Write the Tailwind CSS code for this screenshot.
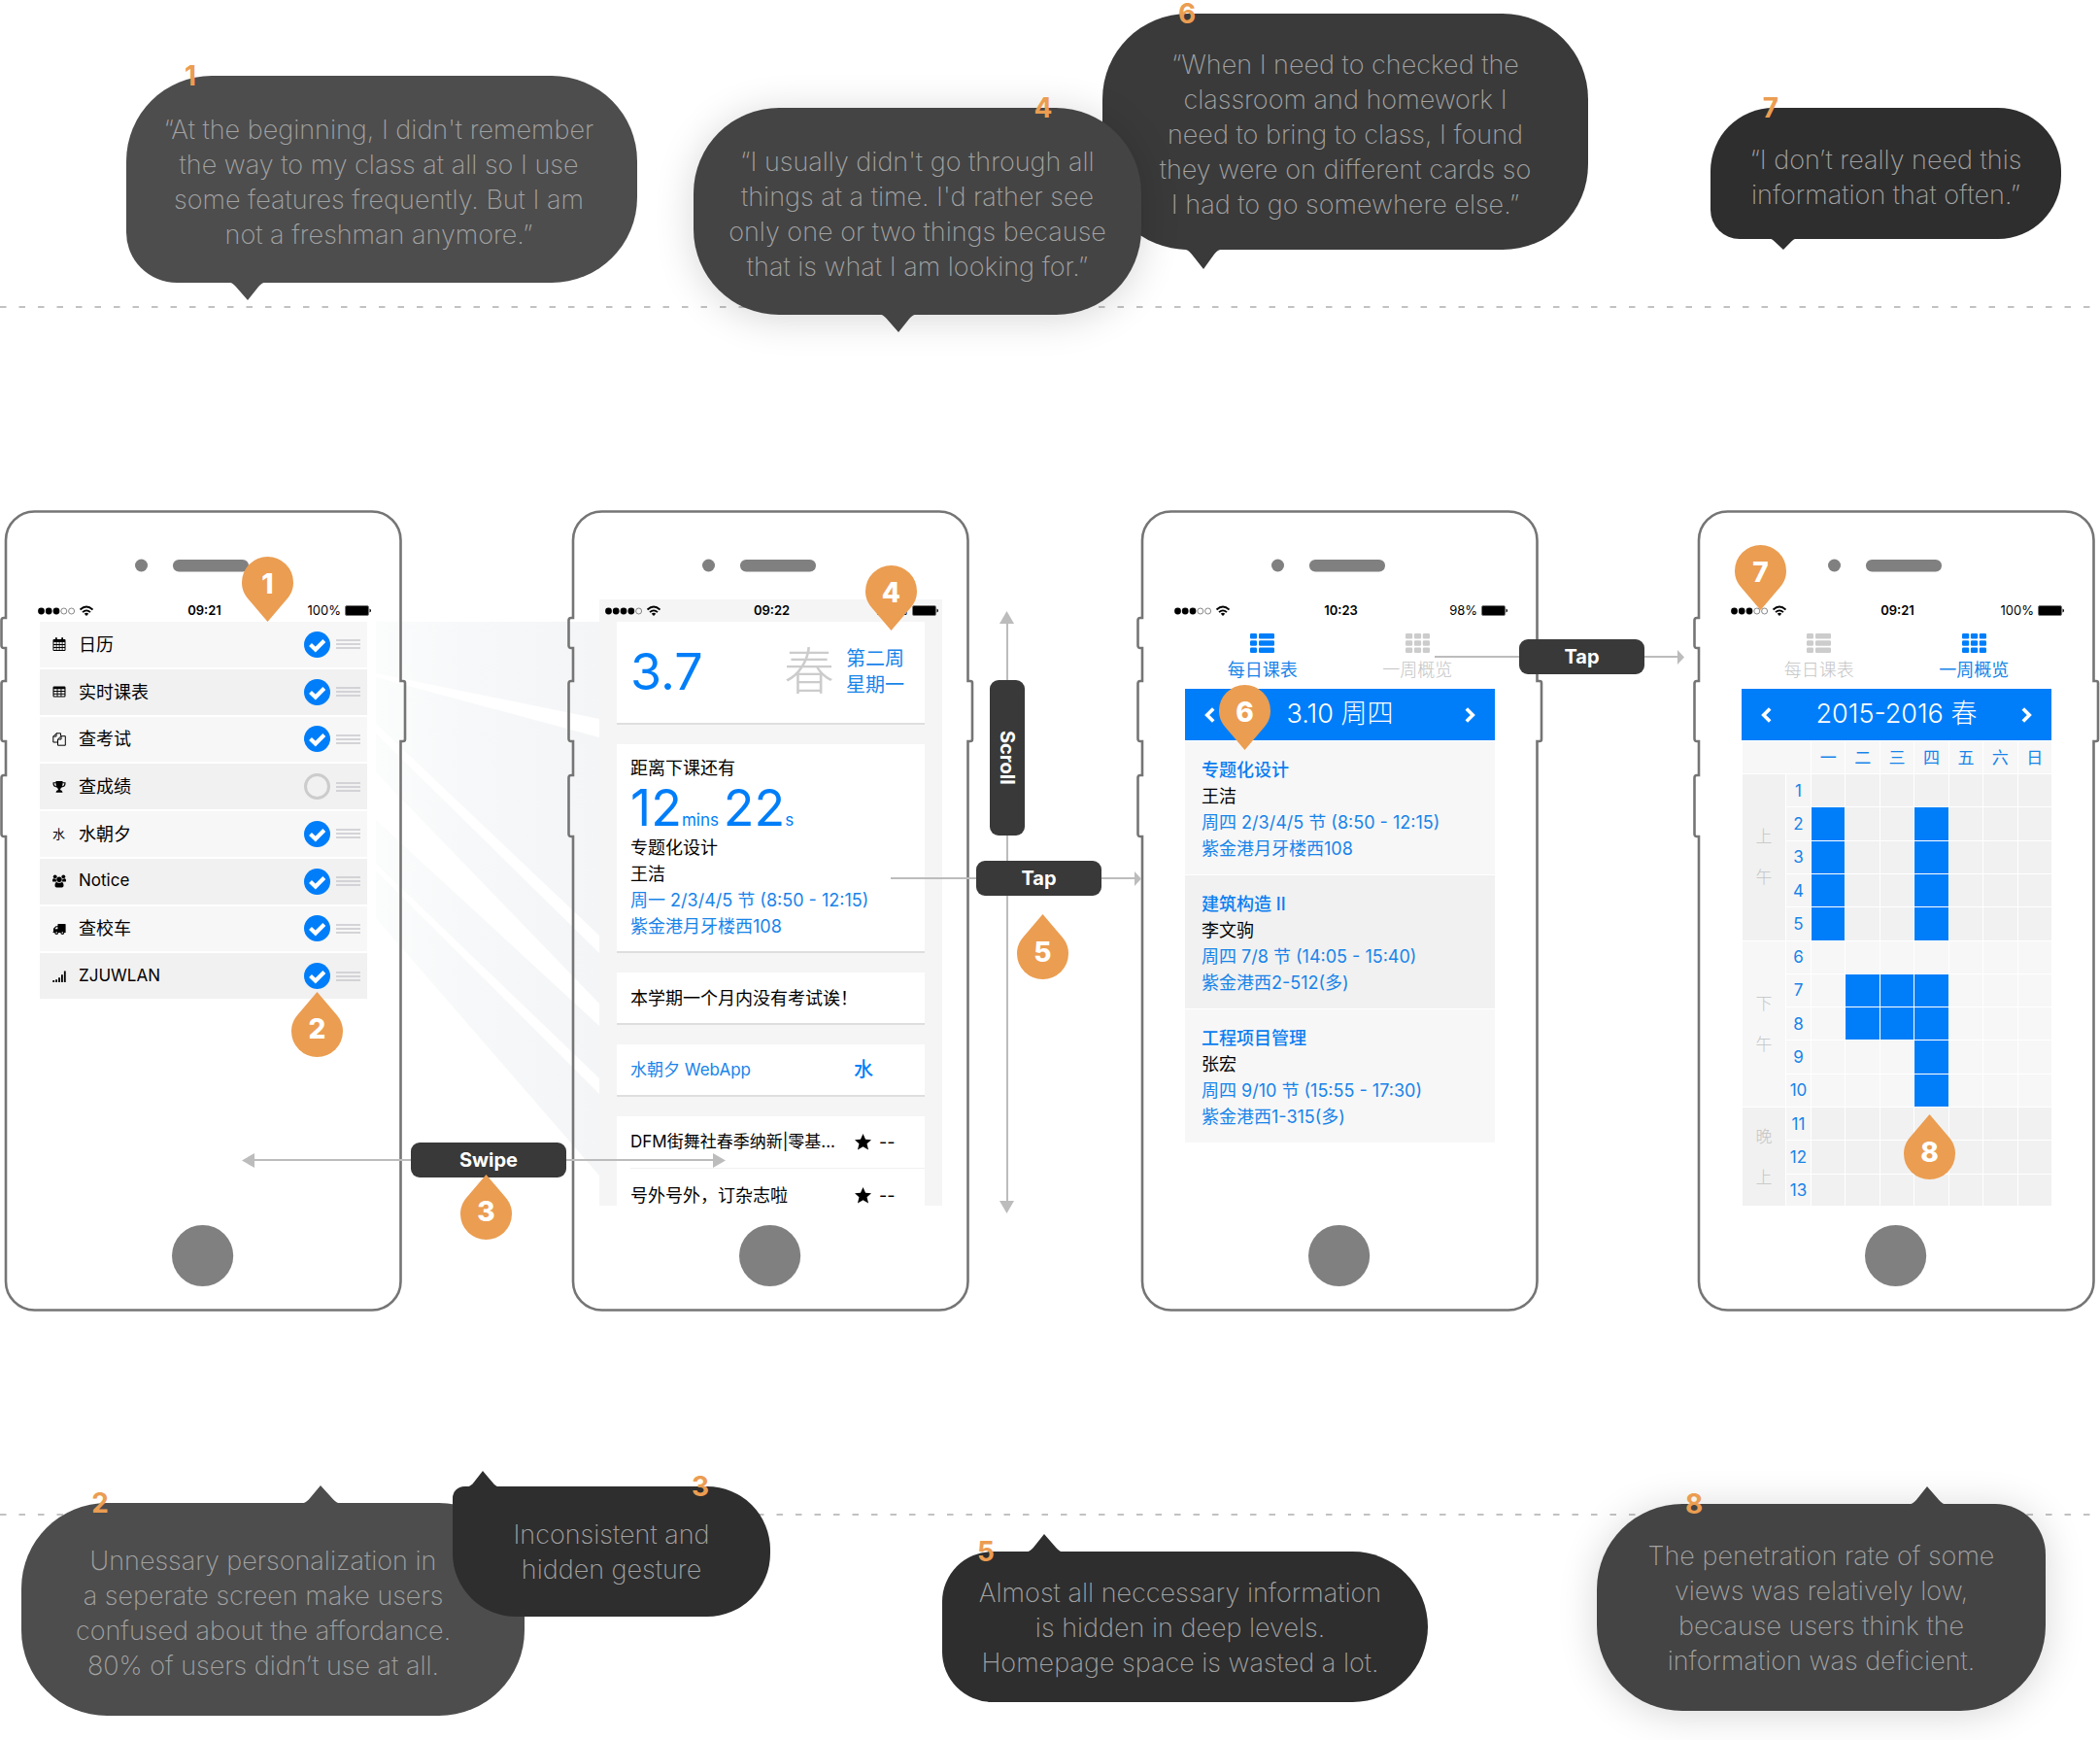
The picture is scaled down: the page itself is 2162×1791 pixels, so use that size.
<!DOCTYPE html>
<html lang="en">
<head>
<meta charset="utf-8">
<meta name="viewport" content="width=device-width, initial-scale=1">
<title>Usability findings: timetable app</title>
<script src="https://cdn.jsdelivr.net/npm/@tailwindcss/browser@4"></script>
</head>
<body class="bg-white font-[Inter,'Noto_Sans_CJK_SC',sans-serif] text-black">

<!-- Shared shapes -->
<svg class="hidden" aria-hidden="true">
  <symbol id="phone" viewBox="0 0 419 825">
    <path fill="none" stroke="#757575" stroke-width="2.6" d="M35.500 1.500H383A29.500 29.500 0 0 1 412.500 31V176H415Q417 176 417 178V236Q417 238 415 238H412.500V793.500A29.500 29.500 0 0 1 383 823.500H35.500A29.500 29.500 0 0 1 6 793.500V336H4Q1.500 336 1.500 333.500V275.500Q1.500 273 4 273H6V238H4Q1.500 238 1.500 235.500V178.500Q1.500 176 4 176H6V142H4Q1.500 142 1.500 139.500V113.500Q1.500 111 4 111H6V31A29.500 29.500 0 0 1 35.500 1.500Z"/>
    <circle cx="145.500" cy="57" r="6.500" fill="#808080"/>
    <rect x="178" y="51" width="78" height="12.500" rx="6.200" fill="#808080"/>
    <circle cx="208.600" cy="767.500" r="31.600" fill="#808080"/>
  </symbol>
  <symbol id="pin" viewBox="0 0 53 67">
    <path fill="#eb9d51" d="M26.500 67L6.500 43.500C2 38 0 33 0 26.500A26.500 26.500 0 0 1 53 26.500C53 33 51 38 46.500 43.500Z"/>
  </symbol>
  <symbol id="tail" viewBox="0 0 46 18" preserveAspectRatio="none">
    <path fill="currentColor" d="M0 0C5 .3 8 1.500 11 5L23 18L34 5C37 1.500 40 .3 46 0Z"/>
  </symbol>
  <symbol id="head" viewBox="0 0 13 15" preserveAspectRatio="none"><path fill="#bcbcbc" d="M0 0L13 7.500L0 15Z"/></symbol>
  <symbol id="tick" viewBox="0 0 27 27"><path fill="none" stroke="#fff" stroke-width="4.200" d="M6.500 13.500L11.800 18.500L20.800 9.500"/></symbol>
  <symbol id="grip" viewBox="0 0 25 10"><path stroke="#c9c9ce" stroke-width="1.300" d="M0 1H25M0 5H25M0 9H25"/></symbol>
  <symbol id="dots3" viewBox="0 0 57 14">
    <circle cx="3.500" cy="7" r="3.400"/><circle cx="11.200" cy="7" r="3.400"/><circle cx="19" cy="7" r="3.400"/>
    <g fill="none" stroke="#555" stroke-width=".7"><circle cx="26.800" cy="7" r="3"/><circle cx="34.600" cy="7" r="3"/></g>
    <g fill="none" stroke="#000" stroke-width="1.800"><path d="M43.500 5.500Q50 -.5 56.500 5.500M46 8.200Q50 4.500 54 8.200"/></g><path d="M47.800 9.700Q50 8 52.200 9.700L50 12Z"/>
  </symbol>
  <symbol id="dots4" viewBox="0 0 57 14">
    <circle cx="3.500" cy="7" r="3.400"/><circle cx="11.200" cy="7" r="3.400"/><circle cx="19" cy="7" r="3.400"/><circle cx="26.800" cy="7" r="3.400"/>
    <g fill="none" stroke="#555" stroke-width=".7"><circle cx="34.600" cy="7" r="3"/></g>
    <g fill="none" stroke="#000" stroke-width="1.800"><path d="M43.500 5.500Q50 -.5 56.500 5.500M46 8.200Q50 4.500 54 8.200"/></g><path d="M47.800 9.700Q50 8 52.200 9.700L50 12Z"/>
  </symbol>
  <symbol id="battery" viewBox="0 0 27 11">
    <rect x=".5" y=".5" width="24" height="10" rx="1.500" fill="#000" stroke="#777"/><path d="M25.500 3.500Q27 4 27 5.500T25.500 7.500Z"/>
  </symbol>
  <symbol id="rows" viewBox="0 0 25 20">
    <g fill="currentColor"><rect width="7" height="5.600" rx="1.300"/><rect x="9" width="16" height="5.600" rx="1.300"/><rect y="7.200" width="7" height="5.600" rx="1.300"/><rect x="9" y="7.200" width="16" height="5.600" rx="1.300"/><rect y="14.400" width="7" height="5.600" rx="1.300"/><rect x="9" y="14.400" width="16" height="5.600" rx="1.300"/></g>
  </symbol>
  <symbol id="cells" viewBox="0 0 25 20">
    <g fill="currentColor"><rect width="7.200" height="5.600" rx="1.300"/><rect x="8.900" width="7.200" height="5.600" rx="1.300"/><rect x="17.800" width="7.200" height="5.600" rx="1.300"/><rect y="7.200" width="7.200" height="5.600" rx="1.300"/><rect x="8.900" y="7.200" width="7.200" height="5.600" rx="1.300"/><rect x="17.800" y="7.200" width="7.200" height="5.600" rx="1.300"/><rect y="14.400" width="7.200" height="5.600" rx="1.300"/><rect x="8.900" y="14.400" width="7.200" height="5.600" rx="1.300"/><rect x="17.800" y="14.400" width="7.200" height="5.600" rx="1.300"/></g>
  </symbol>
  <symbol id="prev" viewBox="0 0 11 16"><path fill="none" stroke="#fff" stroke-width="3.600" d="M9.200 1.500L2.700 8L9.200 14.500"/></symbol>
  <symbol id="next" viewBox="0 0 11 16"><path fill="none" stroke="#fff" stroke-width="3.600" d="M1.800 1.500L8.300 8L1.800 14.500"/></symbol>
  <symbol id="star" viewBox="0 0 16 16"><path d="M8 0L10.400 5.300L16 5.900L11.800 9.700L13.200 15.600L8 12.500L2.800 15.600L4.200 9.700L0 5.900L5.600 5.300Z"/></symbol>
</svg>

<main class="w-full overflow-hidden">

  <!-- Quotes above the flow -->
  <section class="relative h-[525px]">
    <svg class="absolute inset-x-0 top-[315px] h-0.5 w-full"><line x1="0" y1="1" x2="100%" y2="1" stroke="#c2c2c2" stroke-width="2" stroke-dasharray="6.500 13"/></svg>
    <div class="flex items-start text-center text-[27px] leading-9 font-extralight text-[#a3a3a3]">
      <blockquote class="relative mt-[78px] ml-[130px] w-[526px] shrink-0 rounded-[88px] rounded-bl-[52px] bg-[#4d4d4d] pt-[38px] pr-1.5 pb-[31px] whitespace-nowrap">
        “At the beginning, I didn't remember<br>the way to my class at all so I use<br>some features frequently. But I am<br>not a freshman anymore.”
        <span class="absolute -top-3.5 left-[66px] -translate-x-1/2 text-[28px] leading-none font-bold text-[#eb9d51]">1</span>
        <svg class="absolute top-[212px] left-[102px] h-[19px] w-[46px] text-[#4d4d4d]"><use href="#tail"/></svg>
      </blockquote>
      <blockquote class="relative z-10 mt-[111px] ml-[58px] w-[461px] shrink-0 rounded-[88px] bg-[#444444] pt-[38px] pb-[31px] whitespace-nowrap shadow-[0_4px_40px_rgba(0,0,0,0.16)]">
        “I usually didn't go through all<br>things at a time. I'd rather see<br>only one or two things because<br>that is what I am looking for.”
        <span class="absolute -top-3.5 left-[360px] -translate-x-1/2 text-[28px] leading-none font-bold text-[#eb9d51]">4</span>
        <svg class="absolute top-[212px] left-[188px] h-[19px] w-[46px] text-[#444444]"><use href="#tail"/></svg>
      </blockquote>
      <blockquote class="relative mt-[14px] -ml-10 w-[500px] shrink-0 rounded-[88px] bg-[#3a3a3a] pt-[35px] pb-7 whitespace-nowrap">
        “When I need to checked the<br>classroom and homework I<br>need to bring to class, I found<br>they were on different cards so<br>I had to go somewhere else.”
        <span class="absolute -top-3.5 left-[87px] -translate-x-1/2 text-[28px] leading-none font-bold text-[#eb9d51]">6</span>
        <svg class="absolute top-[242px] left-[81px] h-[21px] w-[46px] text-[#3a3a3a]"><use href="#tail"/></svg>
      </blockquote>
      <blockquote class="relative mt-[111px] ml-[126px] w-[361px] shrink-0 rounded-[65px] rounded-bl-[30px] bg-[#2e2e2e] pt-9 pb-[27px] whitespace-nowrap">
        “I don’t really need this<br>information that often.”
        <span class="absolute -top-3.5 left-[62px] -translate-x-1/2 text-[28px] leading-none font-bold text-[#eb9d51]">7</span>
        <svg class="absolute top-[134px] left-[57px] h-3 w-9 text-[#2e2e2e]"><use href="#tail"/></svg>
      </blockquote>
    </div>
  </section>

  <!-- Screens -->
  <section class="grid grid-cols-[584fr_586fr_573fr_419px]">

    <!-- Personalisation list -->
    <div class="relative h-[825px] w-[419px] px-[33px] pt-[92px]">
      <svg class="absolute top-[115px] left-[387px] h-[570px] w-[230px]" viewBox="0 0 229 570" preserveAspectRatio="none">
        <defs><linearGradient id="ray"><stop offset="0" stop-color="#fbfcfc"/><stop offset=".4" stop-color="#f7f8f9"/><stop offset="1" stop-color="#f4f5f7"/></linearGradient></defs>
        <g fill="url(#ray)"><path d="M0 0H229V100L0 53Z"/><path d="M0 57L229 119V323L0 105Z"/><path d="M0 115L229 341V393L0 155Z"/><path d="M0 204L229 416V470L0 249Z"/><path d="M0 256L229 486V570L0 305Z"/></g>
      </svg>
      <svg class="absolute inset-0 h-[825px] w-[419px]"><use href="#phone"/></svg>
      <div class="relative">
        <div class="grid h-[23px] grid-cols-[1fr_auto_1fr] items-center pr-1 pl-1.5 text-[13px]">
          <svg class="h-3.5 w-[57px]"><use href="#dots3"/></svg>
          <span class="font-semibold">09:21</span>
          <span class="flex items-center justify-end gap-1">100%<svg class="h-[11px] w-[27px]"><use href="#battery"/></svg></span>
        </div>
        <ul class="mx-2 grid h-[388px] auto-rows-fr gap-0.5 text-[18px] [&>li]:flex [&>li]:items-center [&>li]:gap-[6px] [&>li]:bg-[#f7f7f7] [&>li]:pr-[7px] [&>li]:pl-[13px] [&>li:nth-child(even)]:bg-[#f1f1f1] [&_label]:ml-[7px] [&_label]:flex-1">
          <li>
            <svg class="size-3.5" viewBox="0 0 14 14"><path fill-rule="evenodd" d="M1.500 2H3V.8Q3 0 3.900 0T4.800 .8V2H9.200V.8Q9.200 0 10.100 0T11 .8V2H12.500Q13.500 2 13.500 3V13Q13.500 14 12.500 14H1.500Q.5 14 .5 13V3Q.5 2 1.500 2ZM1.500 5V7H3.700V5ZM4.500 5V7H6.700V5ZM7.500 5V7H9.700V5ZM10.500 5V7H12.500V5ZM1.500 7.900V10H3.700V7.900ZM4.500 7.900V10H6.700V7.900ZM7.500 7.900V10H9.700V7.900ZM10.500 7.900V10H12.500V7.900ZM1.500 10.900V13H3.700V10.900ZM4.500 10.900V13H6.700V10.900ZM7.500 10.900V13H9.700V10.900ZM10.500 10.900V13H12.500V10.900Z"/></svg>
            <label for="m1">日历</label>
            <span class="relative size-[27px]"><input id="m1" type="checkbox" checked class="block size-[27px] appearance-none rounded-full border-3 border-[#ccc] checked:border-0 checked:bg-[#007ef9]"><svg class="pointer-events-none absolute inset-0 size-[27px]"><use href="#tick"/></svg></span>
            <svg class="h-2.5 w-[25px]"><use href="#grip"/></svg>
          </li>
          <li>
            <svg class="size-3.5" viewBox="0 0 14 14"><path fill-rule="evenodd" d="M1.700 1.500H12.300Q13.500 1.500 13.500 2.700V11.300Q13.500 12.500 12.300 12.500H1.700Q.5 12.500 .5 11.300V2.700Q.5 1.500 1.700 1.500ZM1.600 4.300V6.100H4.600V4.300ZM5.500 4.300V6.100H8.500V4.300ZM9.400 4.300V6.100H12.400V4.300ZM1.600 7V8.800H4.600V7ZM5.500 7V8.800H8.500V7ZM9.400 7V8.800H12.400V7ZM1.600 9.700V11.500H4.600V9.700ZM5.500 9.700V11.500H8.500V9.700ZM9.400 9.700V11.500H12.400V9.700Z"/></svg>
            <label for="m2">实时课表</label>
            <span class="relative size-[27px]"><input id="m2" type="checkbox" checked class="block size-[27px] appearance-none rounded-full border-3 border-[#ccc] checked:border-0 checked:bg-[#007ef9]"><svg class="pointer-events-none absolute inset-0 size-[27px]"><use href="#tick"/></svg></span>
            <svg class="h-2.5 w-[25px]"><use href="#grip"/></svg>
          </li>
          <li>
            <svg class="size-3.5" viewBox="0 0 14 14" fill="none" stroke="#000" stroke-width="1"><path d="M5.500 10H.8V4L4 .8H8.500V3.500M.8 4H4V.8M5.500 13.200V7L9 3.700H13.300V13.200ZM5.500 7H9V3.700"/></svg>
            <label for="m3">查考试</label>
            <span class="relative size-[27px]"><input id="m3" type="checkbox" checked class="block size-[27px] appearance-none rounded-full border-3 border-[#ccc] checked:border-0 checked:bg-[#007ef9]"><svg class="pointer-events-none absolute inset-0 size-[27px]"><use href="#tick"/></svg></span>
            <svg class="h-2.5 w-[25px]"><use href="#grip"/></svg>
          </li>
          <li>
            <svg class="size-3.5" viewBox="0 0 14 14"><path fill-rule="evenodd" d="M3.500 1H10.500V2.300H13.500V4Q13.300 7 9.500 7.500Q8 8.500 8 10Q10.500 10.500 10.500 12.800H3.500Q3.500 10.500 6 10Q6 8.500 4.500 7.500Q.7 7 .5 4V2.300H3.500ZM3.500 3.300H1.600Q1.500 5.500 4 6.400Q3.500 5 3.500 3.300ZM10.500 3.300Q10.500 5 10 6.400Q12.500 5.500 12.400 3.300Z"/></svg>
            <label for="m4">查成绩</label>
            <input id="m4" type="checkbox" class="block size-[27px] appearance-none rounded-full border-3 border-[#ccc]">
            <svg class="h-2.5 w-[25px]"><use href="#grip"/></svg>
          </li>
          <li>
            <span class="w-3.5 text-[13px]">水</span>
            <label for="m5">水朝夕</label>
            <span class="relative size-[27px]"><input id="m5" type="checkbox" checked class="block size-[27px] appearance-none rounded-full border-3 border-[#ccc] checked:border-0 checked:bg-[#007ef9]"><svg class="pointer-events-none absolute inset-0 size-[27px]"><use href="#tick"/></svg></span>
            <svg class="h-2.5 w-[25px]"><use href="#grip"/></svg>
          </li>
          <li>
            <svg class="size-3.5" viewBox="0 0 14 14"><circle cx="2.700" cy="2.300" r="1.900"/><circle cx="11.300" cy="2.300" r="1.900"/><circle cx="7" cy="5.300" r="2.700"/><path d="M0 7V6Q0 4 1.500 4.200Q2.700 5 3.700 4.500Q3.500 6.500 4.500 7.600H1.500Q0 7.600 0 7ZM14 7V6Q14 4 12.500 4.200Q11.300 5 10.300 4.500Q10.500 6.500 9.500 7.600H12.500Q14 7.600 14 7ZM2.500 11.500Q2.500 8 4.500 7.900Q7 9.800 9.500 7.900Q11.500 8 11.500 11.500Q11.500 13.500 9.700 13.500H4.300Q2.500 13.500 2.500 11.500Z"/></svg>
            <label for="m6" class="text-[17px]">Notice</label>
            <span class="relative size-[27px]"><input id="m6" type="checkbox" checked class="block size-[27px] appearance-none rounded-full border-3 border-[#ccc] checked:border-0 checked:bg-[#007ef9]"><svg class="pointer-events-none absolute inset-0 size-[27px]"><use href="#tick"/></svg></span>
            <svg class="h-2.5 w-[25px]"><use href="#grip"/></svg>
          </li>
          <li>
            <svg class="size-3.5" viewBox="0 0 14 14"><path fill-rule="evenodd" d="M6 2H13Q13.600 2 13.600 2.600V11H12.300A2 2 0 0 1 8.300 11H6.200A2 2 0 0 1 2.200 11H.5V10.300Q1 10.300 1 9.500V6.800L3.500 4.200H5.400V2.600Q5.400 2 6 2ZM2.300 7.200H5.400V5.200H4Z"/><circle cx="4.200" cy="11" r=".8" fill="#fff"/><circle cx="10.300" cy="11" r=".8" fill="#fff"/></svg>
            <label for="m7">查校车</label>
            <span class="relative size-[27px]"><input id="m7" type="checkbox" checked class="block size-[27px] appearance-none rounded-full border-3 border-[#ccc] checked:border-0 checked:bg-[#007ef9]"><svg class="pointer-events-none absolute inset-0 size-[27px]"><use href="#tick"/></svg></span>
            <svg class="h-2.5 w-[25px]"><use href="#grip"/></svg>
          </li>
          <li>
            <svg class="size-3.5" viewBox="0 0 14 14"><path d="M.3 11H2.100V13H.3ZM3.200 10.300H5V13H3.200ZM6.100 8.300H7.900V13H6.100ZM9 5.300H10.800V13H9ZM11.900 1.500H13.700V13H11.900Z"/></svg>
            <label for="m8" class="text-[17px]">ZJUWLAN</label>
            <span class="relative size-[27px]"><input id="m8" type="checkbox" checked class="block size-[27px] appearance-none rounded-full border-3 border-[#ccc] checked:border-0 checked:bg-[#007ef9]"><svg class="pointer-events-none absolute inset-0 size-[27px]"><use href="#tick"/></svg></span>
            <svg class="h-2.5 w-[25px]"><use href="#grip"/></svg>
          </li>
        </ul>
      </div>
      <!-- Swipe gesture and pins -->
      <div class="absolute top-[651px] left-[249px] z-20 flex w-[498px] items-center">
        <svg class="h-[15px] w-[13px] rotate-180"><use href="#head"/></svg>
        <span class="h-0.5 w-[161px] bg-[#bcbcbc]"></span>
        <button class="h-9 w-40 rounded-[9px] bg-[#393939] text-xl font-bold text-white">Swipe</button>
        <span class="h-0.5 flex-1 bg-[#bcbcbc]"></span>
        <svg class="h-[15px] w-[13px]"><use href="#head"/></svg>
      </div>
      <div class="absolute top-[48px] left-[249px] z-20 h-[67px] w-[53px] pt-[13px] text-center text-[28px] leading-[30px] font-extrabold text-white"><svg class="absolute inset-0 size-full"><use href="#pin"/></svg><span class="relative">1</span></div>
      <div class="absolute top-[496px] left-[300px] z-20 h-[67px] w-[53px] pt-[23px] text-center text-[28px] leading-[30px] font-extrabold text-white"><svg class="absolute inset-0 size-full rotate-180"><use href="#pin"/></svg><span class="relative">2</span></div>
      <div class="absolute top-[684px] left-[474px] z-20 h-[67px] w-[53px] pt-[23px] text-center text-[28px] leading-[30px] font-extrabold text-white"><svg class="absolute inset-0 size-full rotate-180"><use href="#pin"/></svg><span class="relative">3</span></div>
    </div>

    <!-- Home feed -->
    <div class="relative h-[825px] w-[419px] px-[33px] pt-[92px]">
      <svg class="absolute inset-0 h-[825px] w-[419px]"><use href="#phone"/></svg>
      <div class="relative h-[624px] overflow-hidden bg-[#f5f5f5]">
        <div class="grid h-[23px] grid-cols-[1fr_auto_1fr] items-center pr-1 pl-1.5 text-[13px]">
          <svg class="h-3.5 w-[57px]"><use href="#dots4"/></svg>
          <span class="font-semibold">09:22</span>
          <span class="flex items-center justify-end gap-1">100%<svg class="h-[11px] w-[27px]"><use href="#battery"/></svg></span>
        </div>
        <div class="flex flex-col gap-5 px-[18px] text-[18px] leading-[27px] [&>article]:border-b-2 [&>article]:border-[#dedede] [&>article]:bg-white [&>article]:pl-3.5">
          <article class="flex h-[106px] items-center pr-[21px]">
            <span class="flex-1 text-[52px] leading-none text-[#007ef9]">3.7</span>
            <span class="text-[52px] leading-none font-light text-[#ccc]">春</span>
            <span class="ml-3 text-xl leading-[27px] text-[#1884e9]">第二周<br>星期一</span>
          </article>
          <article class="h-[215px] pt-[11px]">
            <p>距离下课还有</p>
            <p class="h-[55px] text-[52px] leading-[55px] text-[#007ef9]">12<span class="text-[17px]">mins </span>22<span class="text-[17px]">s</span></p>
            <p>专题化设计</p>
            <p>王洁</p>
            <p class="text-[#1884e9]">周一 2/3/4/5 节 (8:50 - 12:15)</p>
            <p class="text-[#1884e9]">紫金港月牙楼西108</p>
          </article>
          <article class="flex h-[54px] items-center">本学期一个月内没有考试诶！</article>
          <article class="flex h-[54px] items-center pr-[53px]"><a href="#" class="flex-1 text-[17px] text-[#1884e9]">水朝夕 WebApp</a><span class="text-xl font-medium text-[#007ef9]">水</span></article>
          <article class="h-[108px]">
            <div class="flex h-[54px] items-center border-b border-[#f1f1f1]"><a href="#" class="w-[231px] text-[17px]">DFM街舞社春季纳新|零基...</a><svg class="size-[17px]"><use href="#star"/></svg><span class="ml-2">--</span></div>
            <div class="flex h-[54px] items-center"><a href="#" class="w-[231px]">号外号外，订杂志啦</a><svg class="size-[17px]"><use href="#star"/></svg><span class="ml-2">--</span></div>
          </article>
        </div>
      </div>
      <!-- Scroll and tap gestures, pins -->
      <div class="absolute top-[104px] left-[434px] z-20 flex h-[620px] w-[37px] flex-col items-center">
        <svg class="h-[13px] w-[15px]" viewBox="0 0 15 13"><path fill="#bcbcbc" d="M7.500 0L15 13H0Z"/></svg>
        <span class="h-[58px] w-0.5 bg-[#bcbcbc]"></span>
        <button class="h-40 w-9 rounded-[9px] bg-[#393939] text-xl font-bold text-white [writing-mode:vertical-rl]">Scroll</button>
        <span class="w-0.5 flex-1 bg-[#bcbcbc]"></span>
        <svg class="h-[13px] w-[15px]" viewBox="0 0 15 13"><path fill="#bcbcbc" d="M0 0H15L7.500 13Z"/></svg>
      </div>
      <div class="absolute top-[361px] left-[333px] z-20 flex w-[258px] items-center">
        <span class="h-0.5 w-[88px] bg-[#bcbcbc]"></span>
        <button class="h-9 w-[129px] rounded-[9px] bg-[#393939] text-xl font-bold text-white">Tap</button>
        <span class="h-0.5 flex-1 bg-[#bcbcbc]"></span>
        <svg class="h-[15px] w-[7px]"><use href="#head"/></svg>
      </div>
      <div class="absolute top-[57px] left-[307px] z-20 h-[67px] w-[53px] pt-[13px] text-center text-[28px] leading-[30px] font-extrabold text-white"><svg class="absolute inset-0 size-full"><use href="#pin"/></svg><span class="relative">4</span></div>
      <div class="absolute top-[416px] left-[463px] z-20 h-[67px] w-[53px] pt-6 text-center text-[28px] leading-[30px] font-extrabold text-white"><svg class="absolute inset-0 size-full rotate-180"><use href="#pin"/></svg><span class="relative">5</span></div>
    </div>

    <!-- Daily timetable -->
    <div class="relative h-[825px] w-[419px] px-[33px] pt-[92px]">
      <svg class="absolute inset-0 h-[825px] w-[419px]"><use href="#phone"/></svg>
      <div class="relative">
        <div class="grid h-[23px] grid-cols-[1fr_auto_1fr] items-center pr-1 pl-1.5 text-[13px]">
          <svg class="h-3.5 w-[57px]"><use href="#dots3"/></svg>
          <span class="font-semibold">10:23</span>
          <span class="flex items-center justify-end gap-1">98%<svg class="h-[11px] w-[27px]"><use href="#battery"/></svg></span>
        </div>
        <div class="mx-[17px]">
          <nav class="grid h-[69px] grid-cols-2 text-[18px] leading-[27px] font-light">
            <button class="flex flex-col items-center gap-1 pt-3 font-normal text-[#1884e9]"><svg class="h-5 w-[25px] text-[#007ef9]"><use href="#rows"/></svg>每日课表</button>
            <button class="flex flex-col items-center gap-1 pt-3 text-[#c4c4c4]"><svg class="h-5 w-[25px] text-[#ccc]"><use href="#cells"/></svg>一周概览</button>
          </nav>
          <div class="flex h-[53px] items-center justify-between bg-[#007ef9] px-5 text-[27px] font-light text-white">
            <button aria-label="Previous day"><svg class="h-4 w-[11px]"><use href="#prev"/></svg></button>3.10 周四<button aria-label="Next day"><svg class="h-4 w-[11px]"><use href="#next"/></svg></button>
          </div>
          <ul class="mt-px flex flex-col gap-px text-[18px] leading-[27px] text-[#1884e9] [&>li]:bg-[#f7f7f7] [&>li]:pt-4 [&>li]:pb-[13px] [&>li]:pl-[17px] [&>li:nth-child(even)]:bg-[#f1f1f1]">
            <li><h3 class="font-medium text-[#0b7df0]">专题化设计</h3><p class="text-black">王洁</p><p>周四 2/3/4/5 节 (8:50 - 12:15)</p><p>紫金港月牙楼西108</p></li>
            <li><h3 class="font-medium text-[#0b7df0]">建筑构造 II</h3><p class="text-black">李文驹</p><p>周四 7/8 节 (14:05 - 15:40)</p><p>紫金港西2-512(多)</p></li>
            <li><h3 class="font-medium text-[#0b7df0]">工程项目管理</h3><p class="text-black">张宏</p><p>周四 9/10 节 (15:55 - 17:30)</p><p>紫金港西1-315(多)</p></li>
          </ul>
        </div>
      </div>
      <div class="absolute top-[133px] left-[307px] z-20 flex w-[257px] items-center">
        <span class="h-0.5 w-[87px] bg-[#bcbcbc]"></span>
        <button class="h-9 w-[129px] rounded-[9px] bg-[#393939] text-xl font-bold text-white">Tap</button>
        <span class="h-0.5 flex-1 bg-[#bcbcbc]"></span>
        <svg class="h-[15px] w-[7px]"><use href="#head"/></svg>
      </div>
      <div class="absolute top-[180px] left-[85px] z-20 h-[67px] w-[53px] pt-[13px] text-center text-[28px] leading-[30px] font-extrabold text-white"><svg class="absolute inset-0 size-full"><use href="#pin"/></svg><span class="relative">6</span></div>
    </div>

    <!-- Weekly overview -->
    <div class="relative h-[825px] w-[419px] px-[33px] pt-[92px]">
      <svg class="absolute inset-0 h-[825px] w-[419px]"><use href="#phone"/></svg>
      <div class="relative h-[624px] overflow-hidden">
        <div class="grid h-[23px] grid-cols-[1fr_auto_1fr] items-center pr-1 pl-1.5 text-[13px]">
          <svg class="h-3.5 w-[57px]"><use href="#dots3"/></svg>
          <span class="font-semibold">09:21</span>
          <span class="flex items-center justify-end gap-1">100%<svg class="h-[11px] w-[27px]"><use href="#battery"/></svg></span>
        </div>
        <div class="mx-[17px]">
          <nav class="grid h-[69px] grid-cols-2 text-[18px] leading-[27px] font-light">
            <button class="flex flex-col items-center gap-1 pt-3 text-[#c4c4c4]"><svg class="h-5 w-[25px] text-[#ccc]"><use href="#rows"/></svg>每日课表</button>
            <button class="flex flex-col items-center gap-1 pt-3 font-normal text-[#1884e9]"><svg class="h-5 w-[25px] text-[#007ef9]"><use href="#cells"/></svg>一周概览</button>
          </nav>
          <div class="flex h-[53px] items-center justify-between bg-[#007ef9] px-5 text-[27px] font-light text-white">
            <button aria-label="Previous term"><svg class="h-4 w-[11px]"><use href="#prev"/></svg></button>2015-2016 春<button aria-label="Next term"><svg class="h-4 w-[11px]"><use href="#next"/></svg></button>
          </div>
          <table class="h-[480px] w-full table-fixed border-separate border-spacing-0 text-center text-[17px] leading-[26px] text-[#1884e9] [&_td]:border-t [&_td]:border-l [&_td]:border-white [&_th]:h-[34px] [&_th]:border-t [&_th]:border-l [&_th]:border-white [&_th]:font-normal">
            <colgroup><col class="w-[45px]"><col class="w-[26px]"><col><col><col><col><col><col><col></colgroup>
            <thead class="bg-[#f7f7f7]"><tr><th colspan="2"></th><th>一</th><th>二</th><th>三</th><th>四</th><th>五</th><th>六</th><th>日</th></tr></thead>
            <tbody class="bg-[#f1f1f1]">
              <tr><td rowspan="5" class="leading-[42px] font-light text-[#c4c4c4]">上<br>午</td><th class="bg-[#f5f5f5]">1</th><td></td><td></td><td></td><td></td><td></td><td></td><td></td></tr>
              <tr><th class="bg-[#f5f5f5]">2</th><td class="bg-[#007ef9]"></td><td></td><td></td><td class="bg-[#007ef9]"></td><td></td><td></td><td></td></tr>
              <tr><th class="bg-[#f5f5f5]">3</th><td class="bg-[#007ef9]"></td><td></td><td></td><td class="bg-[#007ef9]"></td><td></td><td></td><td></td></tr>
              <tr><th class="bg-[#f5f5f5]">4</th><td class="bg-[#007ef9]"></td><td></td><td></td><td class="bg-[#007ef9]"></td><td></td><td></td><td></td></tr>
              <tr><th class="bg-[#f5f5f5]">5</th><td class="bg-[#007ef9]"></td><td></td><td></td><td class="bg-[#007ef9]"></td><td></td><td></td><td></td></tr>
            </tbody>
            <tbody class="bg-[#f7f7f7]">
              <tr><td rowspan="5" class="leading-[42px] font-light text-[#c4c4c4]">下<br>午</td><th>6</th><td></td><td></td><td></td><td></td><td></td><td></td><td></td></tr>
              <tr><th>7</th><td></td><td class="bg-[#007ef9]"></td><td class="bg-[#007ef9]"></td><td class="bg-[#007ef9]"></td><td></td><td></td><td></td></tr>
              <tr><th>8</th><td></td><td class="bg-[#007ef9]"></td><td class="bg-[#007ef9]"></td><td class="bg-[#007ef9]"></td><td></td><td></td><td></td></tr>
              <tr><th>9</th><td></td><td></td><td></td><td class="bg-[#007ef9]"></td><td></td><td></td><td></td></tr>
              <tr><th>10</th><td></td><td></td><td></td><td class="bg-[#007ef9]"></td><td></td><td></td><td></td></tr>
            </tbody>
            <tbody class="bg-[#f1f1f1]">
              <tr><td rowspan="3" class="leading-[42px] font-light text-[#c4c4c4]">晚<br>上</td><th class="bg-[#f5f5f5]">11</th><td></td><td></td><td></td><td></td><td></td><td></td><td></td></tr>
              <tr><th class="bg-[#f5f5f5]">12</th><td></td><td></td><td></td><td></td><td></td><td></td><td></td></tr>
              <tr><th class="bg-[#f5f5f5]">13</th><td></td><td></td><td></td><td></td><td></td><td></td><td></td></tr>
            </tbody>
          </table>
        </div>
      </div>
      <div class="absolute top-[36px] left-[43px] z-20 h-[67px] w-[53px] pt-[13px] text-center text-[28px] leading-[30px] font-extrabold text-white"><svg class="absolute inset-0 size-full"><use href="#pin"/></svg><span class="relative">7</span></div>
      <div class="absolute top-[622px] left-[217px] z-20 h-[67px] w-[53px] pt-6 text-center text-[28px] leading-[30px] font-extrabold text-white"><svg class="absolute inset-0 size-full rotate-180"><use href="#pin"/></svg><span class="relative">8</span></div>
    </div>
  </section>

  <!-- Findings below the flow -->
  <section class="relative h-[441px]">
    <svg class="absolute inset-x-0 top-[208px] h-0.5 w-full"><line x1="0" y1="1" x2="100%" y2="1" stroke="#c2c2c2" stroke-width="2" stroke-dasharray="6.500 13"/></svg>
    <div class="flex items-start text-center text-[27px] leading-9 font-extralight text-[#a3a3a3]">
      <blockquote class="relative mt-[197px] ml-[22px] w-[518px] shrink-0 rounded-[88px] bg-[#4d4d4d] pt-[42px] pr-5 pb-[33px] whitespace-nowrap">
        Unnessary personalization in<br>a seperate screen make users<br>confused about the affordance.<br>80% of users didn’t use at all.
        <span class="absolute -top-3.5 left-[81px] -translate-x-1/2 text-[28px] leading-none font-bold text-[#eb9d51]">2</span>
        <svg class="absolute -top-[18px] left-[284px] h-[19px] w-12 rotate-180 text-[#4d4d4d]"><use href="#tail"/></svg>
      </blockquote>
      <blockquote class="relative z-10 mt-[180px] -ml-[74px] w-[327px] shrink-0 rounded-[65px] rounded-tl-xl bg-[#2e2e2e] pt-8 pb-[30px] whitespace-nowrap">
        Inconsistent and<br>hidden gesture
        <span class="absolute -top-3.5 left-[255px] -translate-x-1/2 text-[28px] leading-none font-bold text-[#eb9d51]">3</span>
        <svg class="absolute -top-4 left-[11px] h-[17px] w-10 rotate-180 text-[#2e2e2e]"><use href="#tail"/></svg>
      </blockquote>
      <blockquote class="relative mt-[247px] ml-[177px] w-[500px] shrink-0 rounded-[78px] rounded-l-[52px] bg-[#2e2e2e] pt-[25px] pr-2.5 pb-[22px] whitespace-nowrap">
        Almost all neccessary information<br>is hidden in deep levels.<br>Homepage space is wasted a lot.
        <span class="absolute -top-3.5 left-[45px] -translate-x-1/2 text-[28px] leading-none font-bold text-[#eb9d51]">5</span>
        <svg class="absolute -top-[18px] left-[82px] h-[19px] w-[46px] rotate-180 text-[#2e2e2e]"><use href="#tail"/></svg>
      </blockquote>
      <blockquote class="relative mt-[198px] ml-[174px] w-[462px] shrink-0 rounded-[88px] rounded-tr-[52px] bg-[#444444] pt-[36px] pb-[33px] whitespace-nowrap shadow-[0_4px_40px_rgba(0,0,0,0.16)]">
        The penetration rate of some<br>views was relatively low,<br>because users think the<br>information was deficient.
        <span class="absolute -top-3.5 left-[100px] -translate-x-1/2 text-[28px] leading-none font-bold text-[#eb9d51]">8</span>
        <svg class="absolute -top-[18px] left-[317px] h-[19px] w-[46px] rotate-180 text-[#444444]"><use href="#tail"/></svg>
      </blockquote>
    </div>
  </section>
</main>
</body>
</html>
